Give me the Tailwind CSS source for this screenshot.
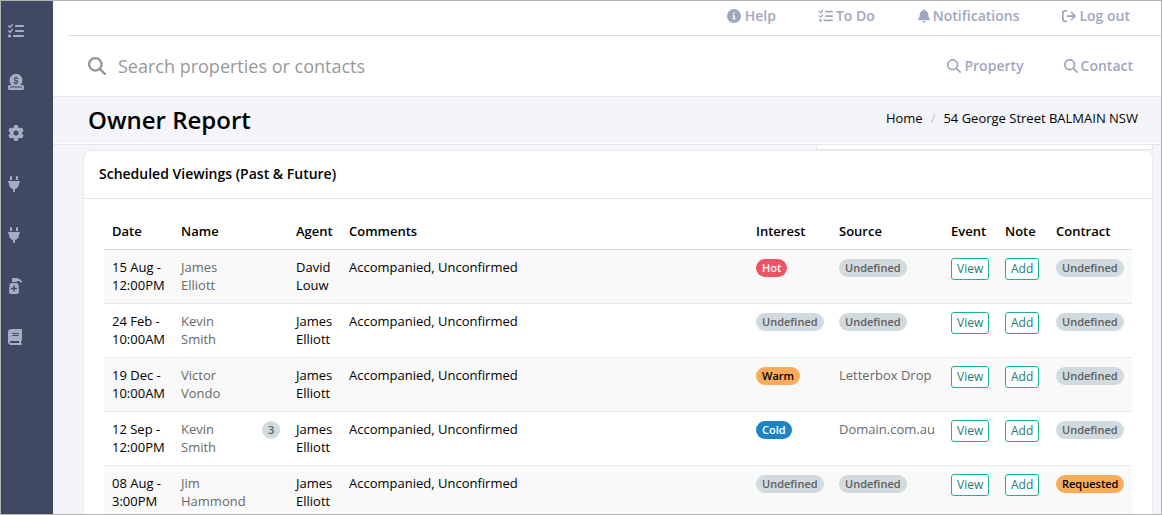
<!DOCTYPE html>
<html lang="en">
<head>
    <meta charset="UTF-8">
    <meta name="viewport" content="width=device-width, initial-scale=1.0">
    <title>Owner Report</title>
    <script src="https://cdn.jsdelivr.net/npm/@tailwindcss/browser@4"></script>
</head>
<body class="bg-white font-['Open_Sans',sans-serif] text-[13px] leading-[18px] text-black">
    <!-- Icons -->
    <svg class="hidden" xmlns="http://www.w3.org/2000/svg">
        <symbol id="list-check" viewBox="0 0 512 512"><path d="M152.1 38.2c9.9 8.9 10.7 24 1.8 33.9l-72 80c-4.4 4.9-10.6 7.8-17.2 7.9s-12.9-2.4-17.6-7L7 113C-2.3 103.6-2.3 88.4 7 79s24.6-9.4 33.9 0l22.1 22.1 55.1-61.2c8.9-9.9 24-10.7 33.9-1.8zm0 160c9.9 8.9 10.7 24 1.8 33.9l-72 80c-4.4 4.9-10.6 7.8-17.2 7.9s-12.9-2.4-17.6-7L7 273c-9.4-9.4-9.4-24.6 0-33.9s24.6-9.4 33.9 0l22.1 22.1 55.1-61.2c8.9-9.9 24-10.7 33.9-1.8zM224 96c0-17.7 14.3-32 32-32H480c17.7 0 32 14.3 32 32s-14.3 32-32 32H256c-17.7 0-32-14.3-32-32zm0 160c0-17.7 14.3-32 32-32H480c17.7 0 32 14.3 32 32s-14.3 32-32 32H256c-17.7 0-32-14.3-32-32zM160 416c0-17.7 14.3-32 32-32H480c17.7 0 32 14.3 32 32s-14.3 32-32 32H192c-17.7 0-32-14.3-32-32zM48 368a48 48 0 1 1 0 96 48 48 0 1 1 0-96z"/></symbol>
        <symbol id="dollar-slot" viewBox="0 0 512 512">
            <path fill-rule="evenodd" d="M48 352H112A208 208 0 1 1 400 352H464c26.500 0 48 21.500 48 48v64c0 26.500-21.500 48-48 48H48c-26.500 0-48-21.500-48-48v-64c0-26.500 21.500-48 48-48zM80 400c-9 0-16 7-16 16s7 16 16 16H432c9 0 16-7 16-16s-7-16-16-16z"/>
            <path fill="none" stroke="#3f4961" stroke-width="38" stroke-linecap="round" d="M256 96v28m0 168v28M308 142c-20-12-44-18-64-16c-50 4-56 60-8 76l36 10c50 16 44 74-8 78c-22 2-48-6-66-18"/>
        </symbol>
        <symbol id="gear" viewBox="0 0 512 512"><path d="M495.9 166.6c3.2 8.7 .5 18.4-6.4 24.6l-43.300 39.400c1.100 8.300 1.700 16.800 1.700 25.400s-.6 17.100-1.700 25.400l43.300 39.400c6.900 6.200 9.600 15.900 6.400 24.600c-4.400 11.900-9.700 23.300-15.800 34.300l-4.700 8.100c-6.600 11-14 21.400-22.100 31.200c-5.900 7.200-15.700 9.600-24.500 6.800l-55.700-17.700c-13.400 10.300-28.200 18.900-44 25.400l-12.500 57.100c-2 9.100-9 16.300-18.200 17.800c-13.800 2.300-28 3.500-42.500 3.500s-28.700-1.200-42.500-3.500c-9.200-1.500-16.200-8.700-18.200-17.800l-12.500-57.100c-15.800-6.500-30.600-15.100-44-25.400L83.100 425.900c-8.800 2.800-18.600 .3-24.500-6.800c-8.100-9.800-15.500-20.200-22.100-31.200l-4.700-8.100c-6.100-11-11.400-22.400-15.800-34.300c-3.200-8.700-.5-18.400 6.400-24.600l43.300-39.400C64.600 273.100 64 264.600 64 256s.6-17.100 1.700-25.400L22.400 191.200c-6.900-6.200-9.600-15.900-6.400-24.600c4.400-11.900 9.700-23.300 15.800-34.300l4.700-8.100c6.600-11 14-21.400 22.100-31.200c5.900-7.200 15.700-9.600 24.500-6.800l55.700 17.700c13.400-10.300 28.200-18.900 44-25.400l12.500-57.100c2-9.100 9-16.300 18.200-17.800C227.300 1.200 241.500 0 256 0s28.700 1.200 42.500 3.500c9.200 1.500 16.200 8.700 18.200 17.800l12.500 57.100c15.800 6.500 30.600 15.100 44 25.400l55.700-17.700c8.800-2.800 18.600-.3 24.500 6.800c8.100 9.800 15.500 20.200 22.100 31.200l4.700 8.100c6.100 11 11.400 22.400 15.800 34.300zM256 336a80 80 0 1 0 0-160 80 80 0 1 0 0 160z"/></symbol>
        <symbol id="plug" viewBox="0 0 384 512"><path d="M96 0C78.3 0 64 14.3 64 32v96h64V32c0-17.7-14.3-32-32-32zM288 0c-17.7 0-32 14.3-32 32v96h64V32c0-17.7-14.3-32-32-32zM32 160c-17.7 0-32 14.3-32 32s14.3 32 32 32v32c0 77.4 55 142 128 156.8V480c0 17.7 14.3 32 32 32s32-14.3 32-32V412.8C297 398 352 333.4 352 256V224c17.7 0 32-14.3 32-32s-14.3-32-32-32H32z"/></symbol>
        <symbol id="pump" viewBox="0 0 448 512"><path fill-rule="evenodd" d="M128 32c0-17.700 14.300-32 32-32h128c17.700 0 32 14.300 32 32h32c17 0 33 7 45 19l42 42c12.500 12.500 12.500 32.800 0 45.300s-32.800 12.500-45.300 0L352 96h-64v32H128zM112 160h160c34 0 62 26 64 60l15 224c3 37-26 68-64 68H97c-38 0-67-31-64-68l15-224c2-34 30-60 64-60zM168 256v56h-56c-9 0-16 7-16 16v16c0 9 7 16 16 16h56v56c0 9 7 16 16 16h16c9 0 16-7 16-16v-56h56c9 0 16-7 16-16v-16c0-9-7-16-16-16h-56v-56c0-9-7-16-16-16h-16c-9 0-16 7-16 16z"/></symbol>
        <symbol id="book" viewBox="0 0 448 512"><path d="M96 0C43 0 0 43 0 96V416c0 53 43 96 96 96H384h32c17.7 0 32-14.3 32-32s-14.3-32-32-32V384c17.7 0 32-14.3 32-32V32c0-17.7-14.3-32-32-32H384 96zm0 384H352v64H96c-17.7 0-32-14.3-32-32s14.3-32 32-32zm32-240c0-8.8 7.2-16 16-16H336c8.8 0 16 7.2 16 16s-7.2 16-16 16H144c-8.8 0-16-7.2-16-16zm16 48H336c8.8 0 16 7.2 16 16s-7.2 16-16 16H144c-8.8 0-16-7.2-16-16s7.2-16 16-16z"/></symbol>
        <symbol id="search" viewBox="0 0 512 512"><path d="M416 208c0 45.9-14.9 88.3-40 122.7L502.6 457.4c12.5 12.5 12.5 32.8 0 45.3s-32.8 12.5-45.3 0L330.7 376c-34.4 25.2-76.8 40-122.7 40C93.1 416 0 322.9 0 208S93.1 0 208 0S416 93.1 416 208zM208 352a144 144 0 1 0 0-288 144 144 0 1 0 0 288z"/></symbol>
        <symbol id="info" viewBox="0 0 512 512"><path d="M256 512A256 256 0 1 0 256 0a256 256 0 1 0 0 512zM216 336h24V272H216c-13.3 0-24-10.7-24-24s10.7-24 24-24h48c13.3 0 24 10.7 24 24v88h8c13.3 0 24 10.7 24 24s-10.7 24-24 24H216c-13.3 0-24-10.7-24-24s10.7-24 24-24zm40-208a32 32 0 1 1 0 64 32 32 0 1 1 0-64z"/></symbol>
        <symbol id="bell" viewBox="0 0 448 512"><path d="M224 0c-17.7 0-32 14.3-32 32V51.2C119 66 64 130.6 64 208v18.8c0 47-17.3 92.4-48.5 127.6l-7.4 8.3c-8.4 9.4-10.4 22.9-5.3 34.4S19.4 416 32 416H416c12.6 0 24-7.4 29.2-18.9s3.1-25-5.3-34.4l-7.4-8.3C401.3 319.2 384 273.9 384 226.8V208c0-77.4-55-142-128-156.8V32c0-17.7-14.3-32-32-32zm45.3 493.3c12-12 18.7-28.3 18.7-45.3H224 160c0 17 6.700 33.300 18.700 45.300s28.300 18.700 45.300 18.700s33.300-6.700 45.300-18.700z"/></symbol>
        <symbol id="logout" viewBox="0 0 512 512"><path d="M502.6 278.6c12.5-12.5 12.5-32.8 0-45.3l-128-128c-12.5-12.5-32.8-12.5-45.3 0s-12.5 32.8 0 45.3L402.7 224 192 224c-17.7 0-32 14.3-32 32s14.3 32 32 32l210.7 0-73.4 73.4c-12.5 12.5-12.5 32.8 0 45.3s32.8 12.5 45.3 0l128-128zM160 96c17.7 0 32-14.3 32-32s-14.3-32-32-32L96 32C43 32 0 75 0 128L0 384c0 53 43 96 96 96l64 0c17.7 0 32-14.3 32-32s-14.3-32-32-32l-64 0c-17.7 0-32-14.3-32-32l0-256c0-17.7 14.3-32 32-32l64 0z"/></symbol>
    </svg>

    <div class="flex h-screen overflow-hidden border border-[#b3b3b3]">
        <!-- Sidebar -->
        <nav class="flex w-[52px] shrink-0 flex-col gap-[35px] bg-[#3f4961] pt-[22px] pl-[7px] text-[#a3aec4]">
            <a href="#" aria-label="Tasks"><svg class="h-4 w-4 fill-current"><use href="#list-check"/></svg></a>
            <a href="#" aria-label="Payments"><svg class="h-4 w-4 fill-current"><use href="#dollar-slot"/></svg></a>
            <a href="#" aria-label="Settings"><svg class="h-4 w-4 fill-current"><use href="#gear"/></svg></a>
            <a href="#" aria-label="Integrations"><svg class="h-4 w-3 fill-current"><use href="#plug"/></svg></a>
            <a href="#" aria-label="Connections"><svg class="h-4 w-3 fill-current"><use href="#plug"/></svg></a>
            <a href="#" aria-label="Supplies"><svg class="h-4 w-[14px] fill-current"><use href="#pump"/></svg></a>
            <a href="#" aria-label="Library"><svg class="h-4 w-[14px] fill-current"><use href="#book"/></svg></a>
        </nav>

        <!-- Main content -->
        <div class="flex min-w-0 grow flex-col bg-[#f4f5fa]">
            <header class="bg-white">
                <div class="ml-[15px] flex h-[35px] items-center justify-end gap-[43px] border-b border-[#dadce0] pr-[31px] pb-1 text-sm font-semibold text-[#9fa7bd]">
                    <a href="#" class="flex items-center gap-1"><svg class="h-[14px] w-[14px] fill-current"><use href="#info"/></svg>Help</a>
                    <a href="#" class="flex items-center gap-[3px]"><svg class="h-[14px] w-[14px] fill-current"><use href="#list-check"/></svg>To Do</a>
                    <a href="#" class="flex items-center gap-[3px]"><svg class="h-[14px] w-3 fill-current"><use href="#bell"/></svg>Notifications</a>
                    <a href="#" class="flex items-center gap-[3px]"><svg class="h-[14px] w-[14px] fill-current"><use href="#logout"/></svg>Log out</a>
                </div>
                <div class="flex h-[61px] items-center border-b border-[#e4e7eb] pr-7 pl-[35px]">
                    <label for="search-box" class="text-[#949494]"><svg class="h-[18px] w-[18px] fill-current" role="img" aria-label="Search"><use href="#search"/></svg></label>
                    <input id="search-box" type="text" placeholder="Search properties or contacts" class="ml-3 min-w-0 grow text-lg placeholder:text-[#999999] focus:outline-none">
                    <div class="flex gap-10 text-sm font-semibold text-[#9fa7bd]">
                        <a href="#" class="flex items-center gap-[3px]"><svg class="h-[14px] w-[14px] fill-current"><use href="#search"/></svg>Property</a>
                        <a href="#" class="flex items-center gap-[3px]"><svg class="h-[14px] w-[14px] fill-current"><use href="#search"/></svg>Contact</a>
                    </div>
                </div>
            </header>

            <div class="flex h-[48px] shrink-0 items-center justify-between border-b border-[#e4e7eb] pr-[23px] pb-[2px] pl-[35px] shadow-[inset_0_-1px_0_#ffffff]">
                <h1 class="text-2xl font-semibold">Owner Report</h1>
                <div class="flex gap-2 pb-1">
                    <a href="#">Home</a>
                    <span class="text-[#c8c8c8]">/</span>
                    <a href="#">54 George Street BALMAIN NSW</a>
                </div>
            </div>

            <main class="pr-2 pl-[30px]">
                <!-- Bottom edge of the panel scrolled under the heading -->
                <div class="ml-auto h-[5px] w-[337px] border border-t-0 border-[#e4e7eb] bg-white"></div>
                <section class="rounded-t-lg border border-[#e7eaec] bg-white">
                    <h2 class="border-b border-[#e7eaec] px-[15px] pt-[14px] pb-[15px] text-sm leading-[18px] font-semibold">Scheduled Viewings (Past &amp; Future)</h2>
                    <div class="px-5 py-[14px]">
                        <table class="w-full table-fixed text-left align-top">
                            <colgroup>
                                <col class="w-[69px]">
                                <col class="w-[81px]">
                                <col class="w-[34px]">
                                <col class="w-[53px]">
                                <col>
                                <col class="w-[83px]">
                                <col class="w-[112px]">
                                <col class="w-[54px]">
                                <col class="w-[51px]">
                                <col class="w-[84px]">
                            </colgroup>
                            <thead>
                                <tr class="h-9 border-b border-[#dddddd] [&>th]:px-2 [&>th]:font-semibold">
                                    <th>Date</th>
                                    <th colspan="2">Name</th>
                                    <th>Agent</th>
                                    <th>Comments</th>
                                    <th>Interest</th>
                                    <th>Source</th>
                                    <th>Event</th>
                                    <th>Note</th>
                                    <th>Contract</th>
                                </tr>
                            </thead>
                            <tbody class="[&>tr]:h-[54px] [&>tr]:border-b [&>tr]:border-[#e7eaec] [&>tr:nth-child(odd)]:bg-[#f9f9f9] [&_td]:px-2 [&_td]:pt-2 [&_td]:pb-[9px] [&_td]:align-top">
                                <tr>
                                    <td>15 Aug - 12:00PM</td>
                                    <td><a href="#" class="text-[#676a6c]">James<br>Elliott</a></td>
                                    <td></td>
                                    <td>David Louw</td>
                                    <td>Accompanied, Unconfirmed</td>
                                    <td><span class="inline-block rounded-full bg-[#ed5565] px-[6px] text-[11px] font-semibold text-white">Hot</span></td>
                                    <td><span class="inline-block rounded-full bg-[#d1dade] px-[6px] text-[11px] font-semibold text-[#5e5e5e]">Undefined</span></td>
                                    <td><button class="block rounded-[3px] border border-[#1ab394] bg-white px-[5px] py-px text-xs leading-[18px] text-[#1f7a72]">View</button></td>
                                    <td><button class="block rounded-[3px] border border-[#1ab394] bg-white px-[5px] py-px text-xs leading-[18px] text-[#1f7a72]">Add</button></td>
                                    <td><span class="inline-block rounded-full bg-[#d1dade] px-[6px] text-[11px] font-semibold text-[#5e5e5e]">Undefined</span></td>
                                </tr>
                                <tr>
                                    <td>24 Feb - 10:00AM</td>
                                    <td><a href="#" class="text-[#676a6c]">Kevin<br>Smith</a></td>
                                    <td></td>
                                    <td>James Elliott</td>
                                    <td>Accompanied, Unconfirmed</td>
                                    <td><span class="inline-block rounded-full bg-[#d1dade] px-[6px] text-[11px] font-semibold text-[#5e5e5e]">Undefined</span></td>
                                    <td><span class="inline-block rounded-full bg-[#d1dade] px-[6px] text-[11px] font-semibold text-[#5e5e5e]">Undefined</span></td>
                                    <td><button class="block rounded-[3px] border border-[#1ab394] bg-white px-[5px] py-px text-xs leading-[18px] text-[#1f7a72]">View</button></td>
                                    <td><button class="block rounded-[3px] border border-[#1ab394] bg-white px-[5px] py-px text-xs leading-[18px] text-[#1f7a72]">Add</button></td>
                                    <td><span class="inline-block rounded-full bg-[#d1dade] px-[6px] text-[11px] font-semibold text-[#5e5e5e]">Undefined</span></td>
                                </tr>
                                <tr>
                                    <td>19 Dec - 10:00AM</td>
                                    <td><a href="#" class="text-[#676a6c]">Victor<br>Vondo</a></td>
                                    <td></td>
                                    <td>James Elliott</td>
                                    <td>Accompanied, Unconfirmed</td>
                                    <td><span class="inline-block rounded-full bg-[#f8ac59] px-[6px] text-[11px] font-semibold text-black">Warm</span></td>
                                    <td class="whitespace-nowrap text-[#676a6c]">Letterbox Drop</td>
                                    <td><button class="block rounded-[3px] border border-[#1ab394] bg-white px-[5px] py-px text-xs leading-[18px] text-[#1f7a72]">View</button></td>
                                    <td><button class="block rounded-[3px] border border-[#1ab394] bg-white px-[5px] py-px text-xs leading-[18px] text-[#1f7a72]">Add</button></td>
                                    <td><span class="inline-block rounded-full bg-[#d1dade] px-[6px] text-[11px] font-semibold text-[#5e5e5e]">Undefined</span></td>
                                </tr>
                                <tr>
                                    <td>12 Sep - 12:00PM</td>
                                    <td><a href="#" class="text-[#676a6c]">Kevin<br>Smith</a></td>
                                    <td><span class="inline-block rounded-full bg-[#d1dade] px-[6px] text-[11px] font-semibold text-[#5e5e5e]">3</span></td>
                                    <td>James Elliott</td>
                                    <td>Accompanied, Unconfirmed</td>
                                    <td><span class="inline-block rounded-full bg-[#1c84c6] px-[6px] text-[11px] font-semibold text-white">Cold</span></td>
                                    <td class="whitespace-nowrap text-[#676a6c]">Domain.com.au</td>
                                    <td><button class="block rounded-[3px] border border-[#1ab394] bg-white px-[5px] py-px text-xs leading-[18px] text-[#1f7a72]">View</button></td>
                                    <td><button class="block rounded-[3px] border border-[#1ab394] bg-white px-[5px] py-px text-xs leading-[18px] text-[#1f7a72]">Add</button></td>
                                    <td><span class="inline-block rounded-full bg-[#d1dade] px-[6px] text-[11px] font-semibold text-[#5e5e5e]">Undefined</span></td>
                                </tr>
                                <tr>
                                    <td>08 Aug - 3:00PM</td>
                                    <td><a href="#" class="text-[#676a6c]">Jim<br>Hammond</a></td>
                                    <td></td>
                                    <td>James Elliott</td>
                                    <td>Accompanied, Unconfirmed</td>
                                    <td><span class="inline-block rounded-full bg-[#d1dade] px-[6px] text-[11px] font-semibold text-[#5e5e5e]">Undefined</span></td>
                                    <td><span class="inline-block rounded-full bg-[#d1dade] px-[6px] text-[11px] font-semibold text-[#5e5e5e]">Undefined</span></td>
                                    <td><button class="block rounded-[3px] border border-[#1ab394] bg-white px-[5px] py-px text-xs leading-[18px] text-[#1f7a72]">View</button></td>
                                    <td><button class="block rounded-[3px] border border-[#1ab394] bg-white px-[5px] py-px text-xs leading-[18px] text-[#1f7a72]">Add</button></td>
                                    <td><span class="inline-block rounded-full bg-[#f8ac59] px-[6px] text-[11px] font-semibold text-black">Requested</span></td>
                                </tr>
                            </tbody>
                        </table>
                    </div>
                </section>
            </main>
        </div>
    </div>
</body>
</html>
